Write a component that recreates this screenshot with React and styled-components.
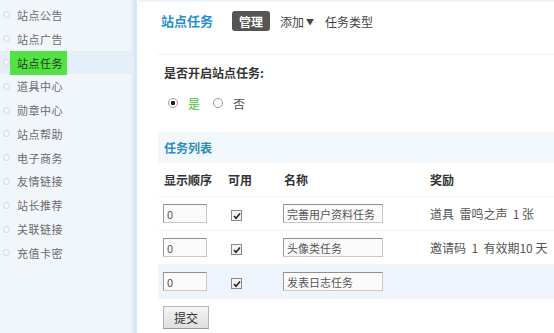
import styled, { createGlobalStyle } from 'styled-components'

const GlobalStyle = createGlobalStyle`
  html, body {
    margin: 0;
    padding: 0;
    background: #fff;
  }
  body {
    font-family: "Noto Sans CJK SC", "DejaVu Sans", sans-serif;
    font-size: 12px;
    color: #333;
  }
`

const menu = ['站点公告', '站点广告', '站点任务', '道具中心', '勋章中心', '站点帮助', '电子商务', '友情链接', '站长推荐', '关联链接', '充值卡密']

const tareas = [
  { orden: '0', nombre: '完善用户资料任务', premio: '道具  雷鸣之声  1 张' },
  { orden: '0', nombre: '头像类任务', premio: '邀请码  1  有效期10 天' },
  { orden: '0', nombre: '发表日志任务', premio: '' },
]

export default function App() {
  return (
    <Pagina>
      <GlobalStyle />
      <Sidebar>
        {menu.map((m) => (
          <Item key={m} $activo={m === '站点任务'}>
            <Punto />
            <Etiqueta $activo={m === '站点任务'}>{m}</Etiqueta>
          </Item>
        ))}
      </Sidebar>

      <Contenido>
        <Encabezado>
          <Titulo>站点任务</Titulo>
          <Pestana $activa>管理</Pestana>
          <Pestana>添加<Flecha>▼</Flecha></Pestana>
          <Pestana>任务类型</Pestana>
        </Encabezado>

        <Seccion>
          <Pregunta>是否开启站点任务:</Pregunta>
          <Opciones>
            <Opcion>
              <Radio $marcado />
              <TextoOpcion $verde>是</TextoOpcion>
            </Opcion>
            <Opcion>
              <Radio />
              <TextoOpcion>否</TextoOpcion>
            </Opcion>
          </Opciones>
        </Seccion>

        <Banda>任务列表</Banda>

        <Tabla>
          <thead>
            <tr>
              <Th style={{ width: 52 }}>显示顺序</Th>
              <Th style={{ width: 44 }}>可用</Th>
              <Th style={{ width: 134 }}>名称</Th>
              <Th>奖励</Th>
            </tr>
          </thead>
          <tbody>
            {tareas.map((t, i) => (
              <Fila key={i} $azul={i === 2}>
                <Td><Entrada $ancho={44} defaultValue={t.orden} /></Td>
                <Td><Casilla><Check /></Casilla></Td>
                <Td><Entrada $ancho={100} defaultValue={t.nombre} /></Td>
                <Td><Premio>{t.premio}</Premio></Td>
              </Fila>
            ))}
          </tbody>
        </Tabla>

        <Acciones>
          <Boton>提交</Boton>
        </Acciones>
      </Contenido>
    </Pagina>
  )
}

const Check = () => (
  <svg width="8" height="8" viewBox="0 0 8 8">
    <path d="M1 4 L3 6.2 L7 1.5" fill="none" stroke="#222" strokeWidth="1.6" />
  </svg>
)

const Pagina = styled.div`
  display: flex;
  width: 554px;
  height: 333px;
  overflow: hidden;
`

const Sidebar = styled.div`
  width: 131px;
  flex-shrink: 0;
  background: #f1f6fb;
  border-right: 3px solid #e3eef8;
  box-shadow: 3px 0 0 #d6e6f4;
  margin-right: 4px;
  padding-top: 3px;
`

const Item = styled.div`
  height: 23.8px;
  display: flex;
  align-items: center;
  background: ${(p) => (p.$activo ? '#e4eef8' : 'transparent')};
`

const Punto = styled.span`
  width: 5px;
  height: 5px;
  border: 1px solid #cfd6dc;
  border-radius: 50%;
  background: #f7f9fb;
  margin-left: 3px;
  flex-shrink: 0;
`

const Etiqueta = styled.span`
  margin-left: ${(p) => (p.$activo ? '0' : '7px')};
  padding: ${(p) => (p.$activo ? '0 4px 0 7px' : '0')};
  height: 24px;
  line-height: 24px;
  background: ${(p) => (p.$activo ? '#53e243' : 'transparent')};
  color: ${(p) => (p.$activo ? '#1f3a1a' : '#6b6b6b')};
  font-size: 11px;
  letter-spacing: 0.5px;
`

const Contenido = styled.div`
  flex: 1;
  min-width: 0;
  padding-left: 20px;
  border-top: 2px solid #eef4fa;
`

const Encabezado = styled.div`
  display: flex;
  align-items: flex-start;
  border-bottom: 1px solid #edf1f4;
  padding: 9px 0 0 3px;
  box-sizing: border-box;
  height: 53px;
`

const Titulo = styled.span`
  color: #2a8fc9;
  font-weight: bold;
  font-size: 13px;
  line-height: 20px;
  margin-right: 19px;
`

const Pestana = styled.span`
  display: inline-flex;
  align-items: center;
  height: 20px;
  padding: 0 ${(p) => (p.$activa ? '7px' : '0')};
  margin-right: ${(p) => (p.$activa ? '10px' : '11px')};
  border-radius: 3px;
  background: ${(p) => (p.$activa ? '#555' : 'transparent')};
  color: ${(p) => (p.$activa ? '#fff' : '#444')};
  font-weight: ${(p) => (p.$activa ? 'bold' : 'normal')};
  font-size: 12px;
`

const Flecha = styled.span`
  font-size: 8px;
  margin-left: 2px;
`

const Seccion = styled.div`
  padding: 8px 6px 0;
  height: 77px;
  box-sizing: border-box;
`

const Pregunta = styled.div`
  font-weight: bold;
  color: #333;
  height: 20px;
  line-height: 20px;
`

const Opciones = styled.div`
  display: flex;
  align-items: center;
  margin-top: 10px;
  height: 20px;
  padding-left: 4px;
`

const Opcion = styled.label`
  display: flex;
  align-items: center;
  margin-right: 13px;
`

const Radio = styled.span`
  width: 8px;
  height: 8px;
  border-radius: 50%;
  border: 1px solid #9a9a9a;
  background: ${(p) => (p.$marcado ? 'radial-gradient(circle, #222 0 2px, #fff 2.5px)' : '#fff')};
  margin-right: 10px;
`

const TextoOpcion = styled.span`
  color: ${(p) => (p.$verde ? '#3fc43c' : '#555')};
`

const Banda = styled.div`
  height: 31px;
  line-height: 31px;
  background: #f2f7fc;
  color: #2b8db8;
  font-weight: bold;
  padding-left: 6px;
`

const Tabla = styled.table`
  border-collapse: collapse;
  width: 420px;
`

const Th = styled.th`
  text-align: left;
  font-weight: bold;
  color: #333;
  height: 33px;
  padding: 0 6px;
  border-bottom: 1px solid #f0f3f6;
  white-space: nowrap;
`

const Fila = styled.tr`
  background: ${(p) => (p.$azul ? '#eef4fb' : 'transparent')};
  td {
    border-bottom: 1px solid ${(p) => (p.$azul ? '#eef4fb' : '#f0f3f6')};
  }
`

const Td = styled.td`
  height: 33px;
  padding: 0 6px;
  white-space: nowrap;
`

const Entrada = styled.input`
  width: ${(p) => p.$ancho}px;
  height: 19px;
  box-sizing: border-box;
  margin: 0 0 0 -1px;
  padding: 0 3px;
  border: 1px solid #c9c9c9;
  border-top-color: #8f8f8f;
  border-left-color: #9a9a9a;
  background: #fbfbfb;
  font-family: "Noto Sans CJK SC", "DejaVu Sans", sans-serif;
  font-size: 11px;
  color: #555;
  outline: none;
`

const Casilla = styled.span`
  display: inline-flex;
  align-items: center;
  justify-content: center;
  width: 9px;
  height: 9px;
  margin-left: 3px;
  border: 1px solid #8a8a8a;
  background: #f4f4f4;
  vertical-align: middle;
`

const Premio = styled.span`
  color: #555;
  white-space: pre;
`

const Acciones = styled.div`
  padding: 7px 5px;
`

const Boton = styled.button`
  width: 46px;
  height: 23px;
  border: 1px solid #b5b5b5;
  border-bottom-color: #999;
  background: linear-gradient(#f4f4f4, #dedede);
  font-family: "Noto Sans CJK SC", "DejaVu Sans", sans-serif;
  font-size: 12px;
  color: #333;
  padding: 0;
`
